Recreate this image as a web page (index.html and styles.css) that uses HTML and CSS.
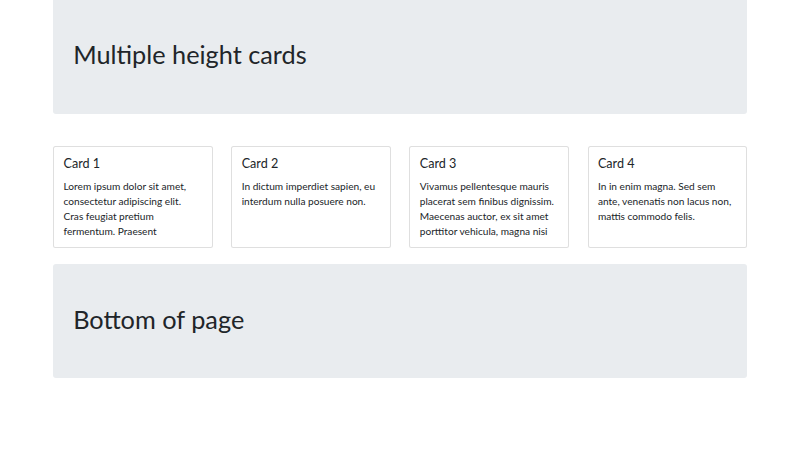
FILE: index.html
```html
<!DOCTYPE html>
<html lang="en">
<head>
<meta charset="utf-8">
<title>Multiple height cards</title>
<link rel="stylesheet" href="styles.css">
</head>
<body>
<div class="container">
  <div class="jumbotron jumbotron-top">
    <h1 class="display">Multiple height cards</h1>
  </div>
  <div class="card-row">
    <div class="card">
      <div class="card-body">
        <h5 class="card-title">Card 1</h5>
        <p class="card-text">Lorem ipsum dolor sit amet, consectetur adipiscing elit. Cras feugiat pretium fermentum. Praesent</p>
      </div>
    </div>
    <div class="card">
      <div class="card-body">
        <h5 class="card-title">Card 2</h5>
        <p class="card-text">In dictum imperdiet sapien, eu interdum nulla posuere non.</p>
      </div>
    </div>
    <div class="card">
      <div class="card-body">
        <h5 class="card-title">Card 3</h5>
        <p class="card-text">Vivamus pellentesque mauris placerat sem finibus dignissim. Maecenas auctor, ex sit amet porttitor vehicula, magna nisi</p>
      </div>
    </div>
    <div class="card">
      <div class="card-body">
        <h5 class="card-title">Card 4</h5>
        <p class="card-text">In in enim magna. Sed sem ante, venenatis non lacus non, mattis commodo felis.</p>
      </div>
    </div>
  </div>
  <div class="jumbotron">
    <h1 class="display">Bottom of page</h1>
  </div>
</div>
</body>
</html>
```
FILE: styles.css
```css
* { box-sizing: border-box; }
html, body {
  margin: 0;
  padding: 0;
  background: #fff;
}
body {
  font-family: Lato, "Noto Sans", "Liberation Sans", sans-serif;
  font-size: 10.15px;
  line-height: 15px;
  color: #212529;
}
.container {
  width: 693.75px;
  margin: 0 auto;
}
.jumbotron {
  background: #e9ecef;
  border-radius: 3px;
  padding: 40px 20px 39.5px;
}
.jumbotron-top {
  border-radius: 0 0 3px 3px;
  margin-top: -1px;
}
.display {
  margin: 0 0 5px;
  font-size: 25.3px;
  font-weight: 400;
  line-height: 30px;
}
.card-row {
  display: grid;
  grid-template-columns: repeat(4, 1fr);
  gap: 18.75px;
  margin: 32.5px 0 16px;
}
.card {
  height: 101.5px;
  border: 1px solid rgba(0, 0, 0, 0.125);
  border-radius: 2.5px;
  background: #fff;
  overflow: hidden;
}
.card-body {
  padding: 9.4px;
}
.card-title {
  margin: 0 0 7.4px;
  font-size: 12.6px;
  font-weight: 400;
  line-height: 15px;
}
.card-text {
  margin: 0;
}
```
